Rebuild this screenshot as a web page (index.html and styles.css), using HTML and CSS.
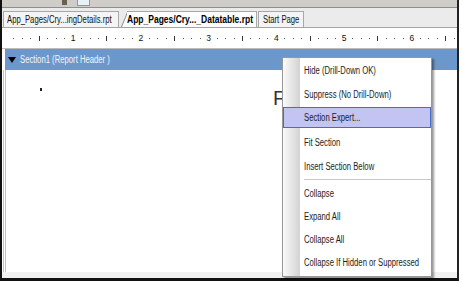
FILE: index.html
```html
<!DOCTYPE HTML>
<html>

<head>
    <meta name="viewport" content="width=device-width, initial-scale=1">
    <title>Report Designer</title>
    <link rel="stylesheet" href="styles.css">
</head>

<body>
    <div class="frame">
        <div class="topstrip">
            <span class="grip"></span>
            <span class="tb-btn"></span>
        </div>
        <div class="tabs">
            <div class="tab tab-details"><span class="t">App_Pages/Cry...ingDetails.rpt</span></div>
            <div class="tab tab-active"><span class="t tb">App_Pages/Cry..._Datatable.rpt</span></div>
            <div class="tab tab-start"><span class="t">Start Page</span></div>
        </div>
        <div class="ruler" id="ruler"></div>
        <div class="section-bar"><span class="arrow"></span><span class="t">Section1 (Report Header )</span></div>
        <div class="canvas">
            <span class="mark"></span>
            <span class="field-f">F</span>
        </div>
        <div class="hscroll"></div>
    </div>

    <div class="menu">
        <div class="item"><span class="t">Hide (Drill-Down OK)</span></div>
        <div class="item"><span class="t">Suppress (No Drill-Down)</span></div>
        <div class="item sel"><span class="t">Section Expert...</span></div>
        <div class="item"><span class="t">Fit Section</span></div>
        <div class="item"><span class="t">Insert Section Below</span></div>
        <div class="sep"></div>
        <div class="item short"><span class="t">Collapse</span></div>
        <div class="item short"><span class="t">Expand All</span></div>
        <div class="item short"><span class="t">Collapse All</span></div>
        <div class="item short"><span class="t">Collapse If Hidden or Suppressed</span></div>
    </div>

    <script>
        // ruler: one cell per 1/8 inch
        var ruler = document.getElementById("ruler");
        for (var i = 1; i <= 53; i++) {
            var cell = document.createElement("span");
            cell.className = "rc";
            var m = document.createElement("span");
            if (i % 8 == 0) {
                m.className = "num";
                m.innerHTML = i / 8;
            } else if (i % 4 == 0) {
                m.className = "tick";
            } else {
                m.className = "dot";
            }
            cell.appendChild(m);
            ruler.appendChild(cell);
        }
    </script>
</body>

</html>
```

FILE: styles.css
```css
* {
    box-sizing: border-box;
}

html,
body {
    margin: 0;
}

body {
    position: relative;
    width: 462px;
    height: 283px;
    overflow: hidden;
    background: #fff;
    font-family: "Liberation Sans", Arial, sans-serif;
    font-size: 10px;
    color: #111;
}

/* old XP screenshot text is squeezed sideways */
.t {
    display: inline-block;
    white-space: nowrap;
    transform: scaleX(0.77);
    transform-origin: 0 50%;
}

.t.tb {
    font-weight: bold;
    transform: scaleX(0.85);
}

.frame {
    width: 459px;
    height: 281px;
    border-left: 2px solid #111;
    border-right: 2px solid #222;
    border-bottom: 3px solid #111;
    display: flex;
    flex-direction: column;
}

.topstrip {
    height: 8px;
    flex: none;
    background: #cfcdc8;
    border-bottom: 1px solid #8e8e8e;
    display: flex;
    align-items: flex-start;
}

.grip {
    width: 5px;
    height: 5px;
    margin-left: 60px;
    background: #6b5f50;
}

.tb-btn {
    width: 13px;
    height: 6px;
    margin-left: 10px;
    border: 1px solid #7b9ac8;
    border-top: 0;
    background: #eaf0f8;
}

.tabs {
    position: relative;
    z-index: 0;
    height: 20px;
    flex: none;
    background: #ebebeb;
    border-bottom: 1px solid #a3a3a3;
    display: flex;
    align-items: flex-end;
    padding-left: 1px;
}

.tab {
    flex: none;
    height: 16px;
    line-height: 15px;
    padding-left: 3px;
    background: #f4f4f4;
    border: 1px solid #a8a8a8;
    border-bottom: 0;
    overflow: visible;
}

.tab-details {
    width: 116px;
}

.tab-active {
    position: relative;
    width: 130px;
    margin-left: 8px;
    padding-left: 0;
    border-left: 0;
    background: #fdfdfd;
    color: #000;
}

.tab-active::before {
    content: "";
    position: absolute;
    z-index: -1;
    left: -6px;
    top: -1px;
    bottom: 0;
    width: 10px;
    background: #fdfdfd;
    border-left: 1px solid #8a8a8a;
    border-top: 1px solid #a8a8a8;
    transform: skewX(-22deg);
    transform-origin: bottom;
}

.tab-start {
    width: 46px;
    margin-left: 1px;
    padding-left: 4px;
}

.ruler {
    height: 21px;
    flex: none;
    background: #fff;
    border-bottom: 1px solid #bdbdbd;
    display: flex;
    align-items: center;
    padding-left: 7.6px;
}

.rc {
    width: 8.475px;
    height: 100%;
    flex: none;
    display: flex;
    justify-content: center;
    align-items: center;
}

.dot {
    width: 1px;
    height: 1px;
    background: #555;
}

.tick {
    width: 1px;
    height: 5px;
    background: #333;
}

.num {
    font-size: 8.5px;
    color: #111;
}

.section-bar {
    height: 21px;
    flex: none;
    margin-left: 3px;
    padding-left: 3px;
    background: #6c97ca;
    color: #f2f6fb;
    display: flex;
    align-items: center;
}

.arrow {
    width: 0;
    height: 0;
    margin-right: 4px;
    border-left: 4px solid transparent;
    border-right: 4px solid transparent;
    border-top: 6px solid #000;
}

.canvas {
    position: relative;
    flex: 1;
    margin-left: 1px;
    border-left: 3px double #c4c4c4;
    background: #fff;
}

.mark {
    position: absolute;
    left: 34px;
    top: 18px;
    width: 2px;
    height: 3px;
    background: #222;
}

.field-f {
    position: absolute;
    left: 267px;
    top: 18px;
    font-size: 20px;
    line-height: 20px;
    color: #333;
}

.hscroll {
    height: 6px;
    flex: none;
    background: #f1f1f1;
}

.menu {
    position: absolute;
    left: 282px;
    top: 57px;
    width: 150px;
    height: 220px;
    border: 1px solid #979797;
    background: linear-gradient(to right, #fafafa 0, #d2d2d2 17px, #fff 17px);
    box-shadow: 2px 2px 2px rgba(0, 0, 0, 0.4);
    color: #1c1c1c;
    display: flex;
    flex-direction: column;
}

.item {
    height: 24px;
    flex: none;
    display: flex;
    align-items: center;
    padding-left: 21px;
}

.item.short {
    height: 23px;
}

.item.sel {
    height: 21px;
    margin: 1px 0 2px;
    padding-left: 20px;
    border: 1px solid #3f6fc9;
    background: #c3c4f1;
}

.sep {
    height: 3px;
    flex: none;
    margin: 1px 0 0 21px;
    border-top: 1px solid #c8c8c8;
}
```
